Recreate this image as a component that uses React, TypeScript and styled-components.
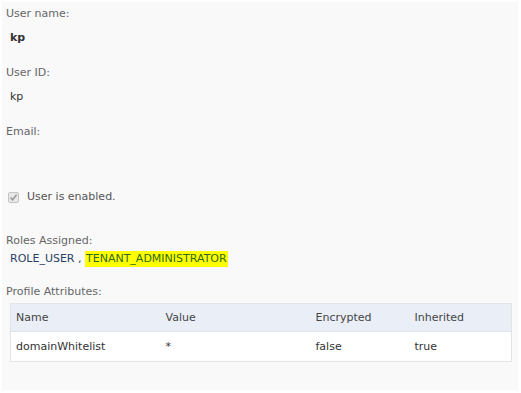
import React from "react";
import styled, { createGlobalStyle } from "styled-components";

const GlobalStyle = createGlobalStyle`
  html, body {
    margin: 0;
    padding: 0;
    background: #ffffff;
  }
  body {
    font-family: "DejaVu Sans", Verdana, sans-serif;
    font-size: 11px;
  }
`;

const Panel = styled.div`
  margin: 2px 3px 0 2px;
  height: 388px;
  box-sizing: border-box;
  background: #f9f9f9;
  padding: 5px 7px 0 4px;
`;

const Label = styled.div`
  color: #666666;
  line-height: 14px;
  height: 14px;
`;

const Value = styled.div<{ $bold?: boolean }>`
  color: #333333;
  font-weight: ${(p) => (p.$bold ? "bold" : "normal")};
  line-height: 14px;
  height: 14px;
  padding-left: 4px;
  margin-top: 10px;
  margin-bottom: 21px;
`;

const EmptyValue = styled.div`
  height: 51px;
`;

const CheckRow = styled.label`
  display: flex;
  align-items: center;
  gap: 8px;
  color: #555555;
  line-height: 14px;
  margin-left: 2px;
  margin-bottom: 30px;
`;

const Check = styled.span`
  width: 11px;
  height: 11px;
  box-sizing: border-box;
  border: 1px solid #c4c4c4;
  background: #e8e8e8;
  border-radius: 2px;
  display: flex;
  align-items: center;
  justify-content: center;
`;

const Roles = styled.div`
  margin-top: 3px;
  padding-left: 4px;
  color: #2b3f66;
  line-height: 16px;
  margin-bottom: 18px;
`;

const Highlight = styled.span`
  background: #ffff00;
  color: #2f6b12;
  padding: 1px 1px 2px;
`;

const Table = styled.table`
  margin: 4px 0 0 4px;
  width: 501px;
  table-layout: fixed;
  border-collapse: collapse;
  border: 1px solid #e1e4e8;
  background: #ffffff;
`;

const Th = styled.th<{ $w: number }>`
  box-sizing: border-box;
  width: ${(p) => p.$w}px;
  text-align: left;
  font-weight: normal;
  color: #444444;
  background: #eaeff7;
  height: 28px;
  padding: 0 0 0 5px;
  border-bottom: 1px solid #dfe3ea;
`;

const Td = styled.td`
  color: #333333;
  height: 29px;
  padding: 0 0 0 5px;
`;

export default function App() {
  return (
    <>
      <GlobalStyle />
      <Panel>
        <Label>User name:</Label>
        <Value $bold>kp</Value>
        <Label>User ID:</Label>
        <Value>kp</Value>
        <Label>Email:</Label>
        <EmptyValue />
        <CheckRow>
          <Check>
            <svg width="9" height="9" viewBox="0 0 9 9">
              <path d="M1.5 4.5 L3.5 6.8 L7.6 1.8" stroke="#9a9a9a" strokeWidth="1.6" fill="none" />
            </svg>
          </Check>
          User is enabled.
        </CheckRow>
        <Label>Roles Assigned:</Label>
        <Roles>
          ROLE_USER , <Highlight>TENANT_ADMINISTRATOR</Highlight>
        </Roles>
        <Label>Profile Attributes:</Label>
        <Table>
          <thead>
            <tr>
              <Th $w={150}>Name</Th>
              <Th $w={150}>Value</Th>
              <Th $w={99}>Encrypted</Th>
              <Th $w={102}>Inherited</Th>
            </tr>
          </thead>
          <tbody>
            <tr>
              <Td>domainWhitelist</Td>
              <Td>*</Td>
              <Td>false</Td>
              <Td>true</Td>
            </tr>
          </tbody>
        </Table>
      </Panel>
    </>
  );
}
